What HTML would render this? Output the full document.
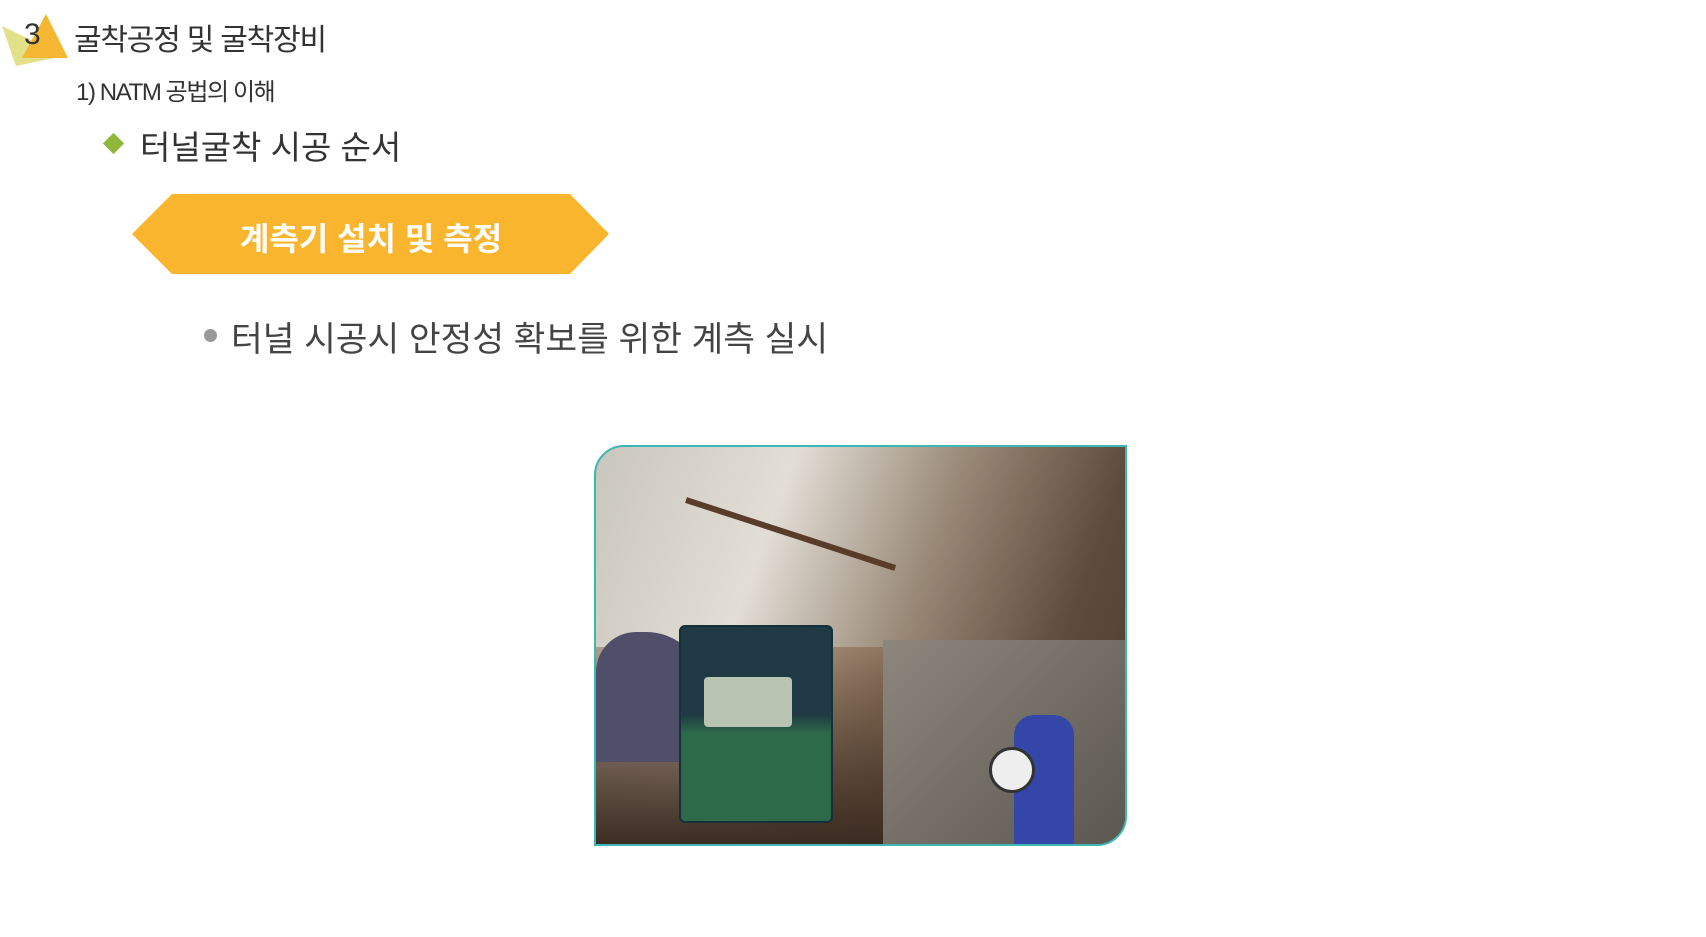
<!DOCTYPE html>
<html><head><meta charset="utf-8"><style>
body{margin:0;width:1706px;height:937px;background:#fff;position:relative;overflow:hidden;font-family:"Liberation Sans","Noto Sans CJK KR",sans-serif;}
.a{position:absolute;white-space:nowrap;}
</style></head><body>
<svg class="a" style="left:0;top:8px" width="70" height="60"><polygon points="2,18 64,48 16,58" fill="#e3e08a"/><polygon points="46,6 68,50 22,50" fill="#f5b731"/></svg>
<div class="a" style="left:24px;top:18px;font-size:30px;color:#333">3</div>
<div class="a" style="left:74px;top:15px;font-size:30px;color:#333;letter-spacing:-1.2px">굴착공정 및 굴착장비</div>
<div class="a" style="left:76px;top:72px;font-size:24px;color:#333;letter-spacing:-1.4px">1) NATM 공법의 이해</div>
<div class="a" style="left:106px;top:136px;width:15px;height:15px;background:#8db83b;transform:rotate(45deg)"></div>
<div class="a" style="left:140px;top:121px;font-size:33px;color:#333">터널굴착 시공 순서</div>
<svg class="a" style="left:132px;top:194px" width="478" height="80"><polygon points="40,0 438,0 477,40 438,80 40,80 0,40" fill="#f9b52e"/></svg>
<div class="a" style="left:132px;top:214px;width:478px;text-align:center;font-size:32px;color:#fff;font-weight:bold">계측기 설치 및 측정</div>
<div class="a" style="left:204px;top:329px;width:13px;height:13px;border-radius:50%;background:#999"></div>
<div class="a" style="left:231px;top:311px;font-size:34.5px;color:#444">터널 시공시 안정성 확보를 위한 계측 실시</div>
<div class="a" style="left:594px;top:445px;width:529px;height:397px;border:2px solid #3fb6b6;border-radius:30px 0 30px 0;overflow:hidden;background:linear-gradient(110deg,#c9c6bd 0%,#e2ded6 30%,#9a8a78 55%,#5f4a3a 80%,#4a3d33 100%)">
 <div class="a" style="left:0;top:200px;width:290px;height:200px;background:linear-gradient(180deg,rgba(120,80,50,0.4),#3a2a20)"></div>
 <div class="a" style="left:90px;top:50px;width:220px;height:6px;background:#5a3c2a;transform:rotate(18deg);transform-origin:left"></div>
 <div class="a" style="left:287px;top:193px;width:243px;height:207px;background:linear-gradient(135deg,#8c877d,#5b5650)"></div>
 <div class="a" style="left:0;top:185px;width:110px;height:130px;background:#4f4f6a;border-radius:40px 60px 20px 0"></div>
 <div class="a" style="left:83px;top:178px;width:150px;height:194px;background:linear-gradient(180deg,#1f3a44 0%,#1f3a44 45%,#2d6a4a 55%,#2d6a4a 100%);border:2px solid #15303a;border-radius:6px"></div>
 <div class="a" style="left:108px;top:230px;width:88px;height:50px;background:#b9c4b3;border-radius:4px"></div>
 <div class="a" style="left:418px;top:268px;width:60px;height:130px;background:#3447a8;border-radius:20px 20px 0 0"></div>
 <div class="a" style="left:393px;top:300px;width:40px;height:40px;border-radius:50%;background:#eee;border:3px solid #333"></div>
</div>
</body></html>
